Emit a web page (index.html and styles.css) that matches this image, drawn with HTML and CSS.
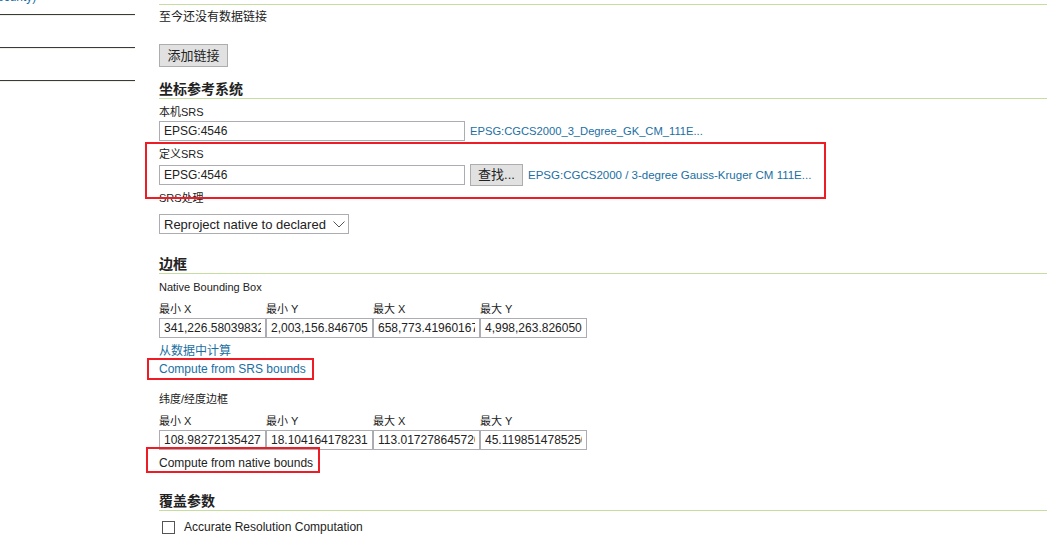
FILE: index.html
```html
<!DOCTYPE html>
<html lang="zh">
<head>
<meta charset="utf-8">
<title>图层编辑</title>
<link rel="stylesheet" href="styles.css">
</head>
<body>
<div class="page">
  <aside class="sidebar">
    <div class="side-link">ecurity)</div>
    <div class="side-item first"></div>
    <div class="side-item"></div>
    <div class="side-item"></div>
  </aside>
  <main class="main">
    <div class="rule"></div>
    <div class="note">至今还没有数据链接</div>
    <div class="btn-wrap"><button class="btn btn-add">添加链接</button></div>

    <h2 class="heading h-first">坐标参考系统</h2>
    <div class="field f-native">
      <div class="lbl">本机SRS</div>
      <div class="row row-native">
        <input class="inp inp-srs" type="text" value="EPSG:4546">
        <a class="link link-epsg" href="#">EPSG:CGCS2000_3_Degree_GK_CM_111E...</a>
      </div>
    </div>
    <div class="field f-declared mark mark-declared">
      <div class="lbl">定义SRS</div>
      <div class="row row-declared">
        <input class="inp inp-srs" type="text" value="EPSG:4546">
        <button class="btn btn-find">查找...</button>
        <a class="link link-epsg link-wide" href="#">EPSG:CGCS2000 / 3-degree Gauss-Kruger CM 111E...</a>
      </div>
    </div>
    <div class="field f-handling">
      <div class="lbl">SRS处理</div>
      <div class="select">
        <span class="select-text">Reproject native to declared</span>
        <svg class="chev" width="12" height="7" viewBox="0 0 12 7"><path d="M0.5 0.5 L6 6 L11.5 0.5" fill="none" stroke="#555" stroke-width="1"/></svg>
      </div>
    </div>

    <h2 class="heading h-bbox">边框</h2>
    <div class="lbl lbl-native">Native Bounding Box</div>
    <div class="bbox">
      <div class="lbl">最小 X</div>
      <div class="lbl">最小 Y</div>
      <div class="lbl">最大 X</div>
      <div class="lbl">最大 Y</div>
      <input class="inp" type="text" value="341,226.580398322">
      <input class="inp" type="text" value="2,003,156.846705">
      <input class="inp" type="text" value="658,773.419601677">
      <input class="inp" type="text" value="4,998,263.8260500">
    </div>
    <div class="line-link l-data"><a class="link link-cn" href="#">从数据中计算</a></div>
    <div class="line-link l-srs"><span class="mark mark-srs"><a class="link" href="#">Compute from SRS bounds</a></span></div>

    <div class="lbl lbl-latlon">纬度/经度边框</div>
    <div class="bbox">
      <div class="lbl">最小 X</div>
      <div class="lbl">最小 Y</div>
      <div class="lbl">最大 X</div>
      <div class="lbl">最大 Y</div>
      <input class="inp" type="text" value="108.982721354279">
      <input class="inp" type="text" value="18.1041641782316">
      <input class="inp" type="text" value="113.017278645720">
      <input class="inp" type="text" value="45.1198514785250">
    </div>
    <div class="line-link l-native"><span class="mark mark-native">Compute from native bounds</span></div>

    <h2 class="heading h-cov">覆盖参数</h2>
    <div class="check-row">
      <span class="checkbox"></span>
      <span class="check-label">Accurate Resolution Computation</span>
    </div>
  </main>
</div>
</body>
</html>
```
FILE: styles.css
```css
* { box-sizing: border-box; }
html, body { margin: 0; padding: 0; background: #fff; }
body {
  font-family: "Liberation Sans", "Noto Sans CJK SC", sans-serif;
  color: #222;
  font-size: 12px;
  overflow: hidden;
  width: 1047px;
  height: 544px;
}
.page { display: flex; gap: 24px; height: 544px; }

/* sidebar */
.sidebar { width: 135px; flex: none; }
.side-link {
  margin-top: -10px;
  margin-left: -3px;
  height: 14px;
  line-height: 14px;
  font-size: 12px;
  color: #1a6fa3;
  white-space: nowrap;
}
.side-item {
  height: 33px;
  border-bottom: 1px solid #3a3a3a;
  box-shadow: 0 1px 0 #eef2e4;
}
.side-item.first { height: 11px; }

/* main column */
.main { flex: 1; min-width: 0; padding-top: 4px; }
.rule { border-top: 1px solid #c6dda0; }
.note { margin-top: 4px; line-height: 16px; font-size: 12px; }

.btn {
  font-family: "Liberation Sans", "Noto Sans CJK SC", sans-serif;
  font-size: 13px;
  color: #222;
  background: #e1e1e1;
  border: 1px solid #adadad;
  border-radius: 0;
  padding: 0;
  margin: 0;
}
.btn-wrap { margin-top: 19px; height: 23px; }
.btn-add { width: 69px; height: 23px; line-height: 21px; display: block; }

.heading {
  margin: 13px 0 0;
  font-size: 14px;
  line-height: 18px;
  font-weight: bold;
  color: #222;
  border-bottom: 1px solid #c6dda0;
}
.h-bbox, .h-cov { margin-top: 21px; }

.lbl { font-size: 11px; line-height: 14px; color: #222; white-space: nowrap; }

.field.f-native { margin-top: 6px; }
.field.f-declared { margin-top: 6px; }
.field.f-handling { margin-top: 5px; }

.row { display: flex; align-items: center; gap: 5px; }
.row-native { margin-top: 2px; }
.row-declared { margin-top: 3px; height: 22px; }

.inp {
  font-family: "Liberation Sans", "Noto Sans CJK SC", sans-serif;
  font-size: 12px;
  color: #222;
  height: 20px;
  border: 1px solid #abadb3;
  padding: 0 4px;
  margin: 0;
  background: #fff;
  outline: none;
  min-width: 0;
}
.inp-srs { width: 306px; }

.link { color: #1a6fa3; text-decoration: none; white-space: nowrap; }
.link-epsg { font-size: 11.2px; }
.link-epsg.link-wide { font-size: 11.5px; }

.btn-find { width: 53px; height: 22px; line-height: 20px; }

.select {
  margin-top: 9px;
  width: 190px;
  height: 20px;
  border: 1px solid #abadb3;
  display: flex;
  align-items: center;
  justify-content: space-between;
  padding: 0 3px 0 4px;
  font-size: 13px;
  color: #222;
}
.chev { display: block; }

.lbl-native { margin-top: 6px; }
.lbl-latlon { margin-top: 15px; }

.bbox {
  display: grid;
  grid-template-columns: repeat(4, 107px);
  row-gap: 2px;
  margin-top: 8px;
}
.bbox .inp { width: 107px; }

.line-link { font-size: 12px; line-height: 16px; }
.l-data { margin-top: 5px; }
.l-srs { margin-top: 2px; }
.l-native { margin-top: 5px; }

/* red annotation boxes */
.mark { position: relative; }
.mark::after {
  content: "";
  position: absolute;
  border: 2px solid #ee1c24;
  pointer-events: none;
}
.mark-declared { width: max-content; }
.mark-declared::after { top: -5px; bottom: -13px; left: -14px; right: -15px; }
.mark-srs, .mark-native { display: inline-block; }
.mark-srs::after { top: -3px; bottom: -3px; left: -12px; right: -8px; }
.mark-native::after { top: -8px; bottom: -2px; left: -13px; right: -7px; }

.check-row {
  margin-top: 9px;
  display: flex;
  align-items: center;
  height: 14px;
  line-height: 14px;
}
.checkbox {
  width: 13px;
  height: 13px;
  border: 1px solid #555;
  margin-left: 3px;
  margin-right: 9px;
  background: #fff;
}
.check-label { font-size: 12px; color: #222; }
```
